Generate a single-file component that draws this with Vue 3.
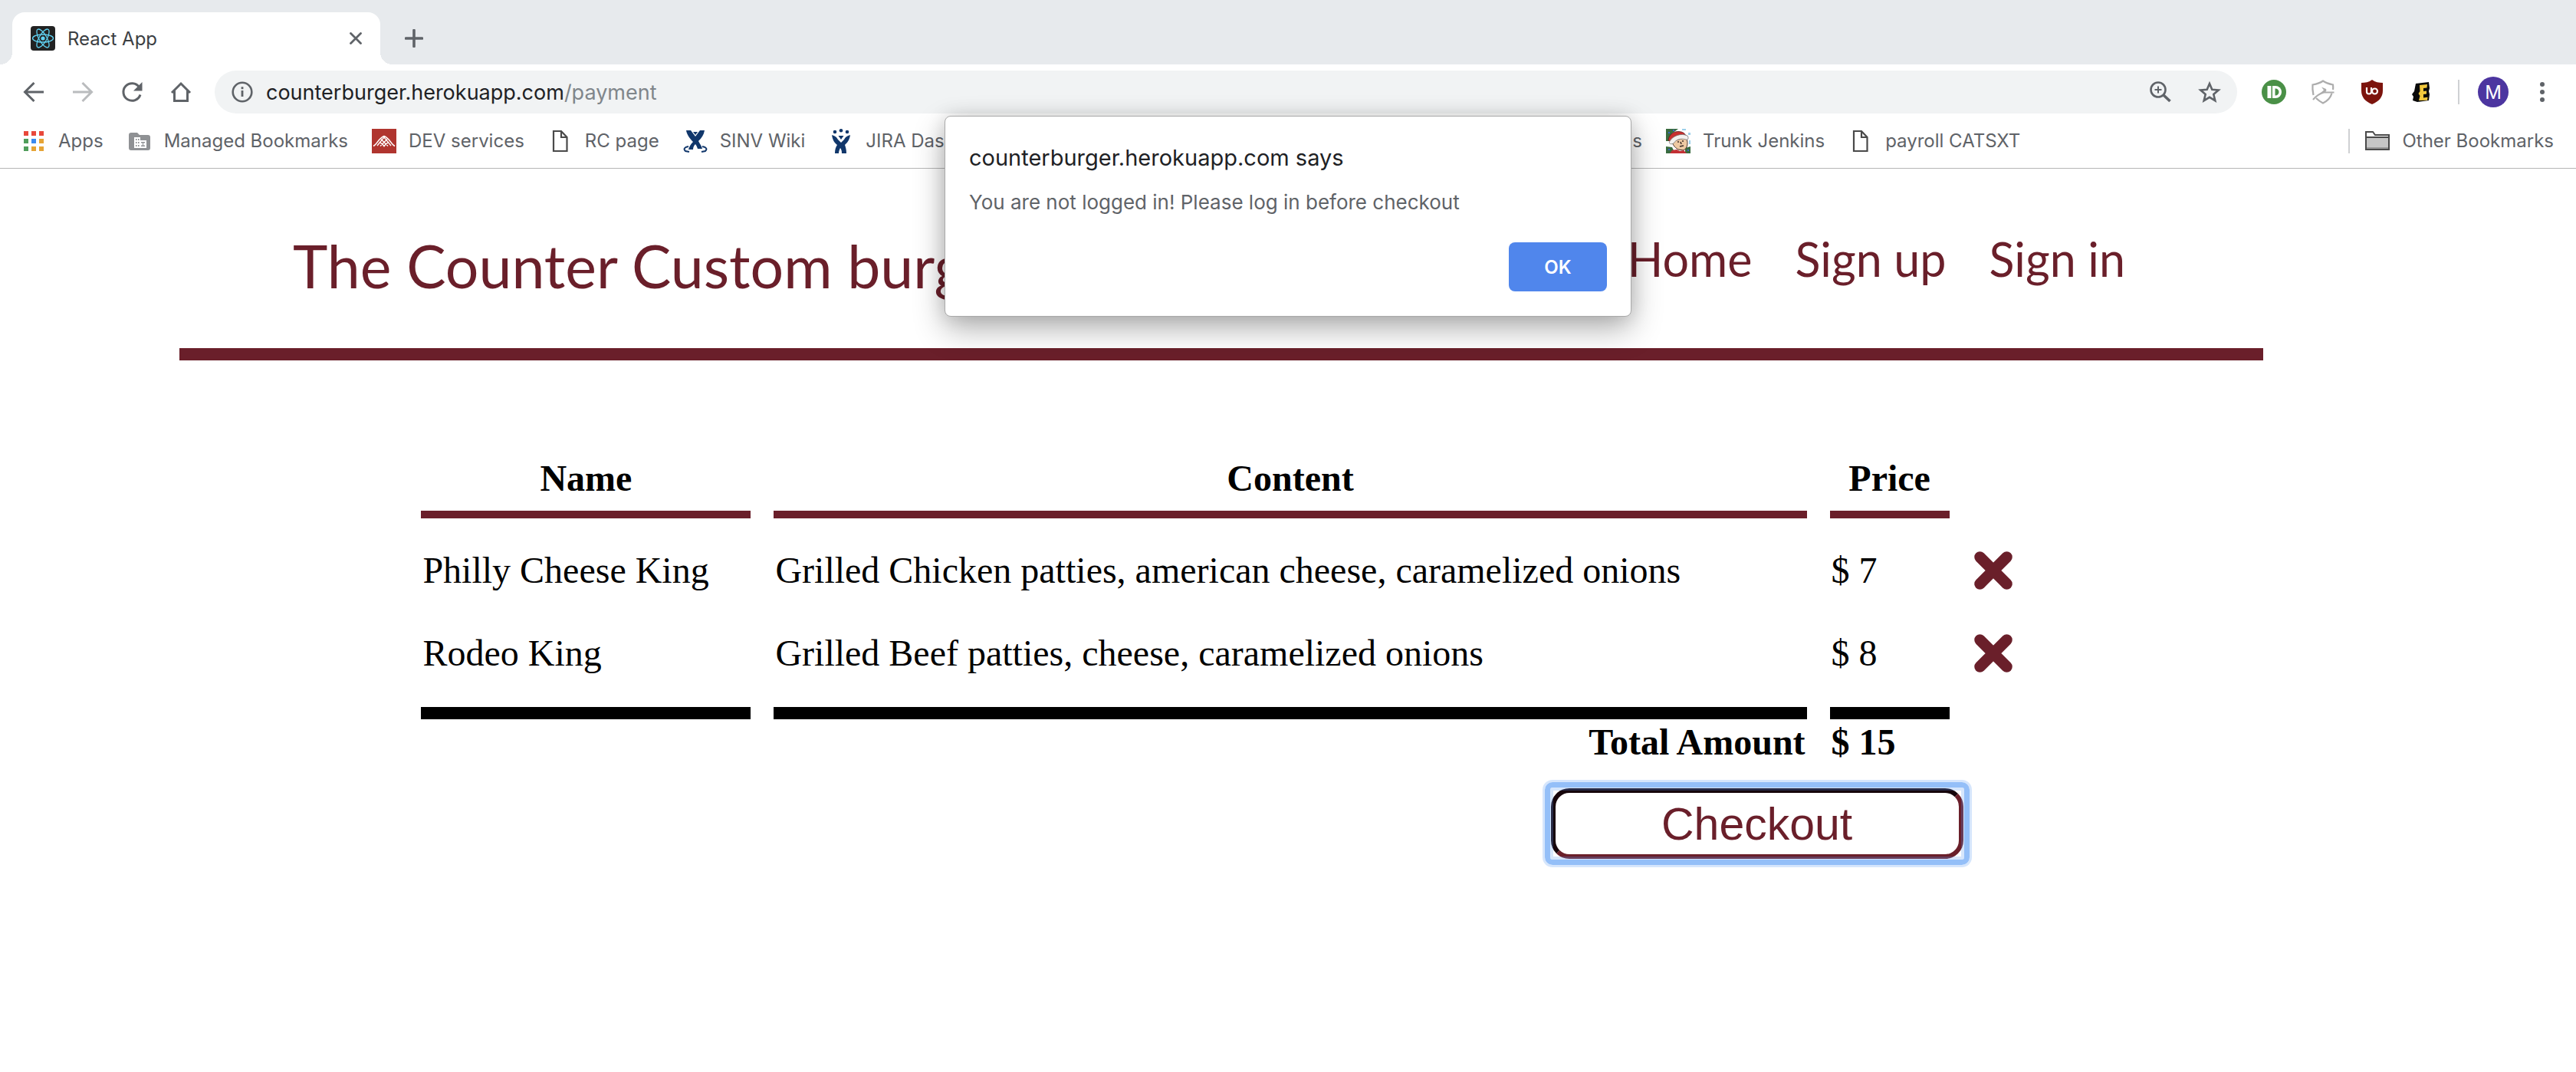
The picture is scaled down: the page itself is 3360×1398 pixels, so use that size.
<script setup>
const leftMarks = [
  { icon: 'apps', label: 'Apps' },
  { icon: 'managed', label: 'Managed Bookmarks' },
  { icon: 'dev', label: 'DEV services' },
  { icon: 'page', label: 'RC page' },
  { icon: 'wiki', label: 'SINV Wiki' },
  { icon: 'jira', label: 'JIRA Das' },
]
const rightMarks = [
  { icon: 'jenkins', label: 'Trunk Jenkins' },
  { icon: 'page', label: 'payroll CATSXT' },
]
const marks = [leftMarks, rightMarks]
const appColors = ['#e8483b', '#e8483b', '#e8483b', '#4f9d5b', '#3b8af0', '#e6a435', '#4f9d5b', '#e6a435', '#e6a435']
const orders = [
  { name: 'Philly Cheese King', content: 'Grilled Chicken patties, american cheese, caramelized onions', price: 7 },
  { name: 'Rodeo King', content: 'Grilled Beef patties, cheese, caramelized onions', price: 8 },
]
const total = orders.reduce((sum, o) => sum + o.price, 0)
</script>

<template>
  <div class="browser">
    <div class="tabstrip">
      <div class="tab">
        <svg class="favicon" viewBox="0 0 32 32" width="32" height="32">
          <rect width="32" height="32" rx="4" fill="#222" />
          <g fill="none" stroke="#61d4f5" stroke-width="1.3">
            <ellipse cx="16" cy="16" rx="13.5" ry="5" />
            <ellipse cx="16" cy="16" rx="13.5" ry="5" transform="rotate(60 16 16)" />
            <ellipse cx="16" cy="16" rx="13.5" ry="5" transform="rotate(120 16 16)" />
          </g>
          <circle cx="16" cy="16" r="2.6" fill="#61d4f5" />
        </svg>
        <span class="tab-title">React App</span>
        <button class="icon-btn" aria-label="Close tab">
          <svg viewBox="0 0 16 16" width="16" height="16"><path d="M1.5 1.5l13 13M14.5 1.5l-13 13" stroke="#5f6368" stroke-width="2.8" stroke-linecap="round" /></svg>
        </button>
      </div>
      <button class="icon-btn new-tab" aria-label="New tab">
        <svg viewBox="0 0 24 24" width="24" height="24"><path d="M12 1.5v21M1.5 12h21" stroke="#5f6368" stroke-width="3.6" stroke-linecap="round" /></svg>
      </button>
    </div>

    <div class="toolbar">
      <button class="icon-btn" aria-label="Back">
        <svg viewBox="0 0 32 32" width="32" height="32" fill="none" stroke="#5f6368" stroke-width="3"><path d="M29 16H5M16.500 4L4.500 16l12 12" /></svg>
      </button>
      <button class="icon-btn" aria-label="Forward">
        <svg viewBox="0 0 32 32" width="32" height="32" fill="none" stroke="#babcbe" stroke-width="3"><path d="M3 16h24M15.500 4l12 12-12 12" /></svg>
      </button>
      <button class="icon-btn" aria-label="Reload">
        <svg viewBox="0 0 32 32" width="32" height="32"><path d="M25.500 9.500A11.300 11.300 0 1 0 27 19.500" fill="none" stroke="#5f6368" stroke-width="3" /><path d="M29.500 3v11.500H18z" fill="#5f6368" /></svg>
      </button>
      <button class="icon-btn" aria-label="Home">
        <svg viewBox="0 0 32 32" width="32" height="32" fill="none" stroke="#5f6368" stroke-width="3"><path d="M4 17L16 5l12 12M7.500 14.500v13h17v-13" /></svg>
      </button>
      <div class="omnibox">
        <svg viewBox="0 0 28 28" width="28" height="28"><circle cx="14" cy="14" r="12.300" fill="none" stroke="#5f6368" stroke-width="2.600" /><path d="M14 12v8M14 7.300v3" stroke="#5f6368" stroke-width="2.800" /></svg>
        <div class="url">counterburger.herokuapp.com<span>/payment</span></div>
        <button class="icon-btn" aria-label="Zoom">
          <svg viewBox="0 0 32 32" width="32" height="32" fill="none" stroke="#5f6368"><circle cx="13" cy="13" r="9.500" stroke-width="2.600" /><path d="M20 20l8.500 8" stroke-width="3.600" /><path d="M13 8.500v9M8.500 13h9" stroke-width="2" /></svg>
        </button>
        <button class="icon-btn" aria-label="Bookmark this page">
          <svg viewBox="0 0 32 32" width="32" height="32" fill="none" stroke="#5f6368" stroke-width="2.600"><path d="M16 5l3.300 7.800 8.400.7-6.400 5.500 2 8.200L16 22.800l-7.300 4.400 2-8.200-6.400-5.500 8.400-.7z" /></svg>
        </button>
      </div>
      <div class="extensions">
        <svg viewBox="0 0 32 32" width="32" height="32"><circle cx="16" cy="16" r="16" fill="#4a9047" /><rect x="7.500" y="8" width="5" height="16" fill="#fff" /><path d="M14 8h4a8 8 0 0 1 0 16h-4z" fill="#fff" /><path d="M17.500 11.500h.5a4.500 4.500 0 0 1 0 9h-.5z" fill="#4a9047" /></svg>
        <svg viewBox="0 0 32 32" width="32" height="32" fill="none" stroke="#adadad" stroke-width="2.200"><path d="M3.500 20C2.500 15 2 11 2.500 6.500 8 5.500 12 4.500 16 1.500c4 3 8 4 13 5 .3 2.500.3 4.500 0 6.500M7 24c3 3 6 5 9 6.500 6-3 10-7 11.500-13" /><path d="M3 26C8 20 12 18 17 16.500h13.500" stroke-width="2.200" /><path d="M13 17l4-3.500-3-4 6 2.500c1 2 0 3.500-2 5z" fill="#adadad" stroke="none" /></svg>
        <svg viewBox="0 0 32 32" width="32" height="32"><path d="M16 0c4 3 9 4 14 4v10c0 9-5 14-14 18C7 28 2 23 2 14V4c5 0 10-1 14-4z" fill="#7c140d" /><g fill="none" stroke="#fff" stroke-width="2.200"><path d="M9 10v5.500a3 3 0 0 0 6 0V10" /><circle cx="19.500" cy="15" r="3.500" /></g></svg>
        <svg viewBox="0 0 32 32" width="32" height="32"><path d="M9 5l17-2 1 8-1 4 1 4-1 8-15 2-6-2 1-5-2-3 3-4z" fill="#0a0a0a" /><path d="M14 7l10-1-.5 4.500-4.500.5v4l4-.5v4l-4 .5v4.500l5.500-.7-.5 4L13 27l1.500-6-2-3 2-3z" fill="#f2c83d" /></svg>
      </div>
      <i class="divider"></i>
      <button class="avatar" aria-label="Profile">M</button>
      <button class="icon-btn" aria-label="Menu">
        <svg viewBox="0 0 8 28" width="8" height="28" fill="#5f6368"><circle cx="4" cy="4" r="3" /><circle cx="4" cy="14" r="3" /><circle cx="4" cy="24" r="3" /></svg>
      </button>
    </div>

    <nav class="bookmarks">
      <div v-for="(group, g) in marks" :key="g" class="mark-group">
        <span v-if="g === 1" class="mark-tail">s</span>
        <a v-for="m in group" :key="m.label" href="#" class="mark">
          <svg viewBox="0 0 32 32" width="32" height="32">
            <template v-if="m.icon === 'apps'">
              <rect v-for="(c, i) in appColors" :key="i" :x="3 + (i % 3) * 10" :y="3 + Math.floor(i / 3) * 10" width="6" height="6" :fill="c" />
            </template>
            <template v-else-if="m.icon === 'managed'">
              <path d="M2 8a3 3 0 0 1 3-3h8l3 3h11a3 3 0 0 1 3 3v14a3 3 0 0 1-3 3H5a3 3 0 0 1-3-3z" fill="#8f9194" />
              <path d="M9 11h8v4h8v10H9z" fill="#fff" />
              <path d="M11 13h1.500v2H11zm3 0h1.500v2H14zm-3 4h1.500v2H11zm3 0h1.500v2H14zm-3 4h1.500v2H11zm3 0h1.500v2H14zm4-4h5v1.500h-2v3h2V23h-5v-1.500h2v-3h-2z" fill="#8f9194" />
            </template>
            <template v-else-if="m.icon === 'dev'">
              <rect width="32" height="32" fill="#b0352f" />
              <path d="M2 22.500C7 20 9 12 16 9.500 23 12 25 20 30 22.500M7 22l9-11 9 11M10 17l7 6M22 17l-7 6M12 13.500l9 9M20 13.500l-9 9" fill="none" stroke="#fff" stroke-width="1.400" />
            </template>
            <path v-else-if="m.icon === 'page'" d="M7 3h10l7.500 8v18H7zM17 3v8h7.500" fill="none" stroke="#4a4a4a" stroke-width="2.200" />
            <template v-else-if="m.icon === 'wiki'">
              <path d="M4 2h6l6 8 6-8h6c-1 6-4 10-8 14 2 4 4 6 5 10h-6c-1-3-2-5-3-6-2 2-3 4-3 7H7c1-4 3-7 6-10C9 13 5 8 4 2z" fill="#11376b" />
              <path d="M13 4h6l-3 4z" fill="#11376b" />
              <path d="M7 23c-5 1-7 3-4 6l5 1M25 23c5 1 7 3 4 6l-5 1" fill="none" stroke="#11376b" stroke-width="2" />
            </template>
            <template v-else-if="m.icon === 'jira'">
              <g fill="#11376b"><circle cx="8" cy="4" r="2.300" /><circle cx="16" cy="2.300" r="2.300" /><circle cx="24" cy="4" r="2.300" /><path d="M4 8c3 1 6 2 8 6l4 4 4-4c2-4 5-5 8-6-1 7-4 10-7 13 1 3 2 6 2 11h-6c0-4-1-6-2-7-1 2-2 4-2 7H8c0-5 1-8 3-11-4-3-6-7-7-13z" /><path d="M12.500 9h7L16 14z" /></g>
            </template>
            <template v-else>
              <rect width="32" height="32" fill="#fff" />
              <path d="M0 0h16L8 6 4 16H0zM0 23l8 1 4 8H0zM25 25l7-2v9h-7z" fill="#396b3f" />
              <path d="M3 4h2v2H3zM9 1h2v2H9zM3 26h2v2H3zM28 27h2v2h-2z" fill="#3c66c4" />
              <path d="M21 0h5v2h-5zM29 5h3v3h-3zM30 15h2v5h-2z" fill="#9bd0ea" />
              <path d="M8 15c3-4 15-6 19-3 2 8 1 13-4 16l-7-1c-5-3-8-7-8-12z" fill="#eec9a2" stroke="#4a3027" stroke-width="1" />
              <path d="M3 15C4 6 12 2 20 4c4 1 6 4 6 7L7 17z" fill="#c9302f" stroke="#5e1d1d" stroke-width=".8" />
              <path d="M5 16C9 9 20 5 28 9c2 3 1 6-2 5-7-2-13 0-16 5-4 2-7 0-5-3z" fill="#f4f1ee" stroke="#777" stroke-width=".8" />
              <path d="M16 16v2M22 15v2M19 17l1 3M18 23l5-1" stroke="#3c2b26" stroke-width="1.500" fill="none" />
              <path d="M8 28l6-1 4 2 5-1 4 4H5z" fill="#c22f34" />
            </template>
          </svg>
          <span>{{ m.label }}</span>
        </a>
      </div>
      <i class="divider"></i>
      <a href="#" class="mark">
        <svg viewBox="0 0 32 32" width="32" height="32"><path d="M1 27V4h9l3 4h18v19z" fill="#fff" stroke="#4a4a4a" stroke-width="2" /><path d="M2 12h28v14H2z" fill="#c6c6c6" /><path d="M1 11h30" stroke="#4a4a4a" stroke-width="2" /><path d="M2 25h28" stroke="#999" stroke-width="2" /></svg>
        <span>Other Bookmarks</span>
      </a>
    </nav>

    <main class="page">
      <header class="site-header">
        <h1>The Counter Custom burger</h1>
        <nav class="site-nav">
          <a href="#">Home</a>
          <a href="#">Sign up</a>
          <a href="#">Sign in</a>
        </nav>
      </header>

      <table class="orders">
        <colgroup>
          <col class="col-name" />
          <col />
          <col class="col-price" />
          <col class="col-remove" />
        </colgroup>
        <thead>
          <tr><th>Name</th><th>Content</th><th>Price</th><td></td></tr>
        </thead>
        <tbody>
          <tr v-for="o in orders" :key="o.name">
            <td>{{ o.name }}</td>
            <td>{{ o.content }}</td>
            <td>$ {{ o.price }}</td>
            <td class="remove">
              <button :aria-label="'Remove ' + o.name">
                <svg viewBox="0 0 50 50" width="50" height="50"><path d="M7.500 7.500l35 35M42.500 7.500l-35 35" stroke="#6a1f2a" stroke-width="14.500" stroke-linecap="round" /></svg>
              </button>
            </td>
          </tr>
        </tbody>
        <tfoot>
          <tr><td></td><th class="total">Total Amount</th><th class="sum">$ {{ total }}</th><td></td></tr>
        </tfoot>
      </table>
      <div class="actions">
        <button class="checkout">Checkout</button>
      </div>
    </main>

    <div class="dialog" role="dialog" aria-labelledby="dlg-title">
      <h2 id="dlg-title">counterburger.herokuapp.com says</h2>
      <p>You are not logged in! Please log in before checkout</p>
      <button class="ok">OK</button>
    </div>
  </div>
</template>

<style>
body {
  margin: 0;
  background: #fff;
}
</style>

<style scoped>
.browser {
  position: relative;
  min-height: 100vh;
  overflow: hidden;
  font-family: Inter, Roboto, sans-serif;
  color: #5f6368;
}
button {
  padding: 0;
  border: 0;
  background: none;
  font: inherit;
  color: inherit;
}
a {
  color: inherit;
  text-decoration: none;
}
svg {
  display: block;
  flex: none;
}
.tabstrip {
  display: flex;
  align-items: flex-end;
  height: 84px;
  padding-left: 16px;
  background: #e7eaed;
}
.tab {
  position: relative;
  display: flex;
  align-items: center;
  box-sizing: border-box;
  width: 480px;
  height: 68px;
  padding: 0 24px;
  border-radius: 16px 16px 0 0;
  background: #fff;
}
.tab::before,
.tab::after {
  content: '';
  position: absolute;
  bottom: 0;
  width: 16px;
  height: 16px;
}
.tab::before {
  right: 100%;
  background: radial-gradient(circle at 0 0, transparent 16px, #fff 16px);
}
.tab::after {
  left: 100%;
  background: radial-gradient(circle at 100% 0, transparent 16px, #fff 16px);
}
.tab-title {
  flex: 1;
  padding-left: 16px;
  font-size: 24px;
  color: #3c4043;
}
.new-tab {
  margin: 0 0 22px 32px;
}
.toolbar {
  display: flex;
  align-items: center;
  gap: 32px;
  height: 56px;
  padding: 8px 40px 0 28px;
}
.omnibox {
  display: flex;
  flex: 1;
  align-items: center;
  box-sizing: border-box;
  height: 56px;
  margin-left: -4px;
  padding: 0 20px 0 22px;
  border-radius: 28px;
  background: #f1f3f4;
}
.omnibox .icon-btn + .icon-btn {
  margin-left: 32px;
}
.url {
  flex: 1;
  padding-left: 17px;
  font-size: 27px;
  color: #202124;
}
.url span {
  color: #80868b;
}
.extensions {
  display: flex;
  gap: 32px;
}
.divider {
  flex: none;
  width: 2px;
  height: 32px;
  background: #cfd1d3;
}
.toolbar .divider {
  margin: 0 -8px 0 0;
}
.avatar {
  width: 40px;
  height: 40px;
  border-radius: 50%;
  background: #4c35a0;
  font-size: 24px;
  color: #fff;
}
.toolbar .avatar + .icon-btn {
  margin-left: 8px;
}
.bookmarks {
  display: flex;
  align-items: center;
  height: 71px;
  padding: 0 29px 0 28px;
  border-bottom: 1px solid #b6b6b6;
  font-size: 24px;
}
.mark-group {
  display: flex;
  gap: 31px;
}
.mark-group:first-child {
  width: 2050px;
}
.mark-group + .mark-group {
  flex: 1;
}
.mark {
  display: flex;
  align-items: center;
  gap: 16px;
  white-space: nowrap;
}
.mark-tail {
  width: 64px;
  line-height: 32px;
  text-align: right;
}
.bookmarks .divider {
  margin-right: 20px;
}
.page {
  padding: 0 408px 0 234px;
  font-family: "Liberation Serif", "Times New Roman", serif;
  font-size: 48px;
  line-height: 56px;
  color: #000;
}
.site-header {
  display: flex;
  justify-content: space-between;
  height: 234px;
  padding: 0 180px 0 148px;
  border-bottom: 16px solid #6a1f2a;
  font-family: Papyrus, Lato, sans-serif;
  color: #6a1f2a;
}
.site-header h1 {
  margin: 76px 0 0;
  font-size: 77px;
  font-weight: 400;
  line-height: 100px;
}
.site-nav {
  display: flex;
  gap: 56px;
  margin-top: 78px;
  font-size: 61px;
  line-height: 80px;
}
.orders {
  width: 79%;
  margin: 126px auto 0;
  border-spacing: 30px 0;
  table-layout: fixed;
}
.col-name {
  width: 430px;
}
.col-price {
  width: 156px;
}
.col-remove {
  width: 64px;
}
.orders th,
.orders td {
  padding: 0 2px;
  text-align: left;
}
.orders thead th {
  padding-bottom: 14px;
  border-bottom: 10px solid #6a1f2a;
  text-align: center;
}
.orders tbody td {
  padding: 40px 2px 12px;
}
.orders tbody tr:last-child td {
  padding-bottom: 42px;
  border-bottom: 16px solid #000;
}
.orders tbody tr:last-child .remove {
  border-bottom-color: transparent;
}
.remove button {
  display: block;
  height: 56px;
}
.orders .total {
  text-align: right;
}
.orders tfoot th {
  padding-top: 2px;
}
.actions {
  display: flex;
  justify-content: flex-end;
  box-sizing: border-box;
  width: 79%;
  margin: 32px auto 0;
  padding-right: 106px;
}
.checkout {
  position: relative;
  width: 538px;
  height: 92px;
  padding-top: 2px;
  border: 6px solid #6a1f2a;
  border-top-color: #16050b;
  border-left-color: #16050b;
  border-radius: 24px;
  font-family: "Liberation Sans", Arial, sans-serif;
  font-size: 59px;
  color: #6a1f2a;
}
.checkout::after {
  content: '';
  position: absolute;
  inset: -14px;
  border: 7px solid #94bff8;
  border-radius: 10px;
  box-shadow: 0 0 0 3px #d6e6fc, inset 0 0 0 4px rgba(90, 155, 245, 0.25);
}
.dialog {
  position: absolute;
  top: 151px;
  left: 50%;
  display: flex;
  flex-direction: column;
  box-sizing: border-box;
  width: 896px;
  margin-left: -448px;
  padding: 32px 31px;
  border: 1px solid #a9a9a9;
  border-radius: 8px;
  background: #fff;
  box-shadow: 0 16px 40px rgba(0, 0, 0, 0.3), 0 0 24px rgba(0, 0, 0, 0.12);
}
.dialog h2 {
  margin: 0;
  font-size: 29px;
  font-weight: 400;
  line-height: 44px;
  color: #202124;
}
.dialog p {
  margin: 20px 0 36px;
  font-size: 26px;
  line-height: 32px;
}
.ok {
  align-self: flex-end;
  width: 128px;
  height: 64px;
  border-radius: 8px;
  background: #5086ec;
  font-size: 24px;
  font-weight: 600;
  color: #fff;
}
</style>
